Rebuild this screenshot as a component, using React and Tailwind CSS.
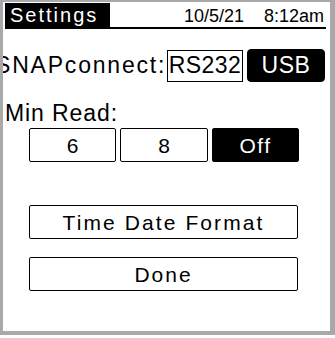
import React from 'react';

const font = { fontFamily: '"Liberation Sans", Arial, sans-serif' };

function BoxButton({ label, active, className = '', textClass = '' }) {
  return (
    <div
      className={`flex items-center justify-center rounded-[2px] border-[1.5px] border-black ${
        active ? 'bg-black text-white' : 'bg-white text-black'
      } ${className}`}
    >
      <span className={`leading-none whitespace-nowrap ${textClass}`}>{label}</span>
    </div>
  );
}

export default function App() {
  return (
    <div className="w-[335px] h-[338px] bg-white" style={font}>
      <div className="w-[335px] h-[335px] border-l-[3px] border-t-[2px] border-r-[5px] border-b-[4px] border-[#a9a9a9] overflow-hidden flex flex-col text-black">
        {/* header */}
        <div className="mt-[1px] ml-[2px] mr-[4px] h-[26px] border-b-2 border-black flex justify-between">
          <div className="w-[105px] h-[24px] bg-black text-white pl-[5px] text-[20px] leading-[24px] tracking-[2px]">
            Settings
          </div>
          <div className="flex gap-[20px] pr-[2px] pt-[3px] text-[18px] leading-[20px]">
            <span>10/5/21</span>
            <span>8:12am</span>
          </div>
        </div>

        {/* SNAPconnect */}
        <div className="mt-[20px] h-[33px] flex items-center">
          <span className="ml-[-8px] w-[172px] shrink-0 text-[23px] leading-none tracking-[1.8px] whitespace-nowrap">
            SNAPconnect:
          </span>
          <BoxButton
            label="RS232"
            className="w-[76px] h-[32px] rounded-none border-2"
            textClass="text-[23px] tracking-[0.4px]"
          />
          <BoxButton
            label="USB"
            active
            className="ml-[4px] w-[78px] h-[33px] rounded-[4px]"
            textClass="text-[23px] tracking-[0.6px]"
          />
        </div>

        {/* Min Read */}
        <div className="mt-[19px] ml-[2px] text-[23px] leading-[25px] tracking-[0.9px]">Min Read:</div>
        <div className="mt-[2px] ml-[26px] flex gap-[4px]">
          <BoxButton label="6" className="w-[87px] h-[34px] border-2" textClass="text-[21px]" />
          <BoxButton label="8" className="w-[88px] h-[34px] border-2" textClass="text-[21px]" />
          <BoxButton label="Off" active className="w-[87px] h-[34px] border-2" textClass="text-[21px] tracking-[1.5px]" />
        </div>

        {/* actions */}
        <BoxButton
          label="Time Date Format"
          className="mt-[43px] ml-[26px] w-[269px] h-[34px] border-2"
          textClass="text-[21px] tracking-[2.1px]"
        />
        <BoxButton
          label="Done"
          className="mt-[18px] ml-[26px] w-[269px] h-[34px] border-2"
          textClass="text-[21px] tracking-[2px]"
        />
      </div>
    </div>
  );
}
